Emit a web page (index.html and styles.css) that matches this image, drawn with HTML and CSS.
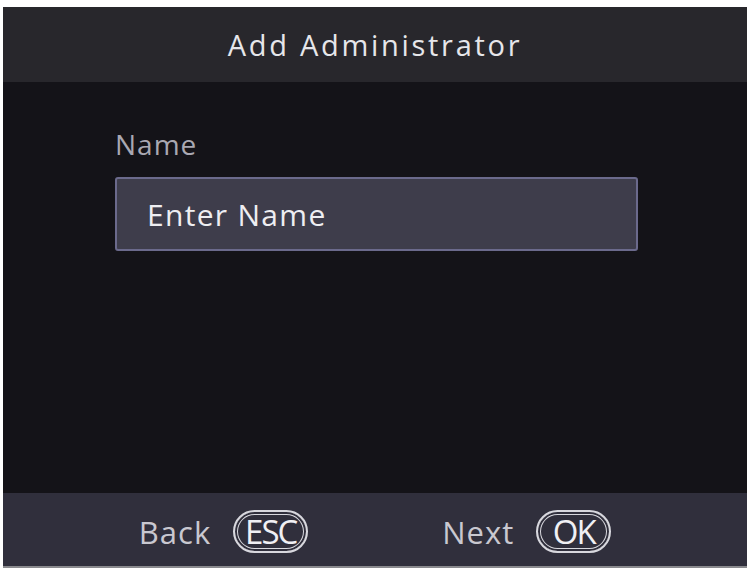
FILE: index.html
```html
<!DOCTYPE html>
<html lang="en">

<head>
    <meta charset="utf-8">
    <meta name="viewport" content="width=device-width, initial-scale=1.0">
    <title>Add Administrator</title>
    <link rel="stylesheet" href="styles.css">
</head>

<body>
    <div class="screen">
        <header class="titlebar">
            <h1>Add Administrator</h1>
        </header>
        <main class="content">
            <label class="label" for="name">Name</label>
            <div class="field" id="name">Enter Name</div>
        </main>
        <footer class="keys">
            <div class="key">
                <span>Back</span>
                <span class="pill">ESC</span>
            </div>
            <div class="key">
                <span>Next</span>
                <span class="pill">OK</span>
            </div>
        </footer>
    </div>
</body>

</html>
```

FILE: styles.css
```css
body {
    margin: 0;
    background: #ffffff;
    font-family: "Open Sans", "DejaVu Sans", sans-serif;
}

.screen {
    width: 744px;
    height: 559px;
    margin: 7px 0 0 3px;
    display: flex;
    flex-direction: column;
    background: #141318;
    border-bottom: 2px solid #8a8a8e;
}

.titlebar {
    height: 75px;
    background: #28272c;
    display: flex;
    align-items: center;
    justify-content: center;
}

.titlebar h1 {
    margin: 0;
    font-size: 29px;
    font-weight: normal;
    color: #e6e6ea;
    letter-spacing: 2.7px;
}

.content {
    flex: 1;
    padding: 44px 0 0 112px;
}

.label {
    display: block;
    font-size: 28px;
    color: #a9a8b2;
    line-height: 36px;
    letter-spacing: 1px;
    margin-bottom: 15px;
}

.field {
    width: 523px;
    height: 74px;
    box-sizing: border-box;
    background: #3e3d4b;
    border: 2px solid #6b6a8c;
    border-radius: 3px;
    padding-left: 30px;
    display: flex;
    align-items: center;
    font-size: 30px;
    letter-spacing: 1.3px;
    color: #eeeef2;
}

.keys {
    height: 73px;
    padding-top: 4px;
    box-sizing: border-box;
    background: #302f3c;
    display: flex;
    align-items: center;
    justify-content: center;
    gap: 134px;
    color: #c9c8d0;
    font-size: 31px;
}

.key {
    display: flex;
    align-items: center;
    gap: 22px;
}

.key span:first-child {
    letter-spacing: 1px;
}

.pill {
    width: 75px;
    height: 43px;
    box-sizing: border-box;
    display: flex;
    align-items: center;
    justify-content: center;
    border: 2px solid #d8d8de;
    border-radius: 22px;
    box-shadow: inset 0 0 0 2px #302f3c, inset 0 0 0 3px #d8d8de;
    color: #f0f0f4;
    font-size: 33px;
    letter-spacing: -2px;
}
```
